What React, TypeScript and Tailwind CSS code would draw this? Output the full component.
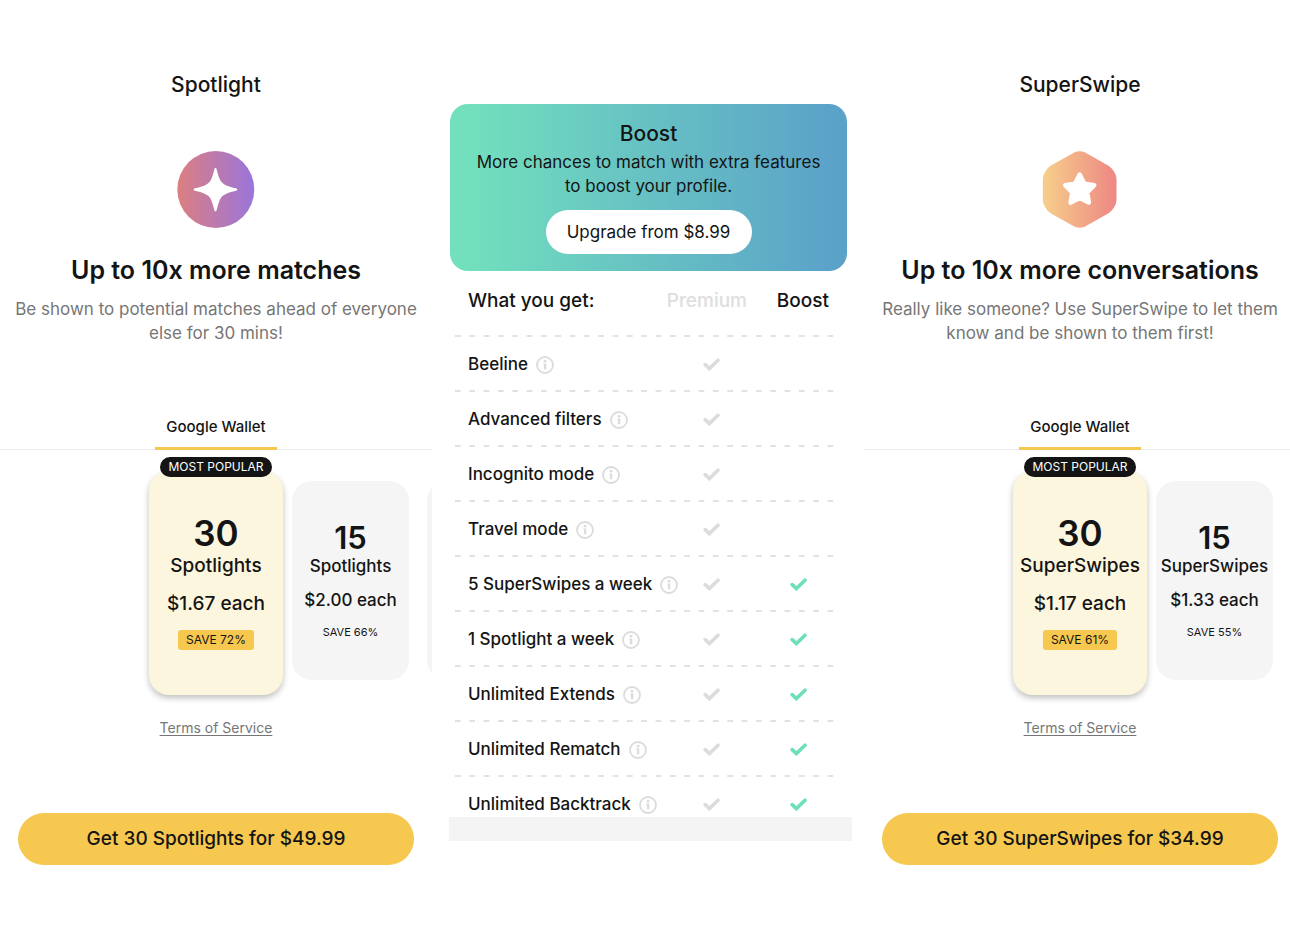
import type { ReactNode } from 'react';

type Plan = { count: number; each: string; save: string };

type Product = {
  name: string;
  headline: string;
  blurb: string;
  plans: Plan[];
  hasMore: boolean;
  total: string;
};

const spotlight: Product = {
  name: 'Spotlight',
  headline: 'Up to 10x more matches',
  blurb: 'Be shown to potential matches ahead of everyone else for 30 mins!',
  plans: [
    { count: 30, each: '$1.67 each', save: 'SAVE 72%' },
    { count: 15, each: '$2.00 each', save: 'SAVE 66%' },
  ],
  hasMore: true,
  total: '$49.99',
};

const superSwipe: Product = {
  name: 'SuperSwipe',
  headline: 'Up to 10x more conversations',
  blurb: 'Really like someone? Use SuperSwipe to let them know and be shown to them first!',
  plans: [
    { count: 30, each: '$1.17 each', save: 'SAVE 61%' },
    { count: 15, each: '$1.33 each', save: 'SAVE 55%' },
  ],
  hasMore: false,
  total: '$34.99',
};

const features = [
  { label: 'Beeline', boost: false },
  { label: 'Advanced filters', boost: false },
  { label: 'Incognito mode', boost: false },
  { label: 'Travel mode', boost: false },
  { label: '5 SuperSwipes a week', boost: true },
  { label: '1 Spotlight a week', boost: true },
  { label: 'Unlimited Extends', boost: true },
  { label: 'Unlimited Rematch', boost: true },
  { label: 'Unlimited Backtrack', boost: true },
];

function SpotlightIcon() {
  return (
    <svg width="78" height="77" viewBox="0 0 78 77" aria-hidden="true">
      <defs>
        <linearGradient id="spotlight-fill" x1="0" x2="1" y1="0" y2="0">
          <stop offset="0" stopColor="#dc7f80" />
          <stop offset="1" stopColor="#9a75dc" />
        </linearGradient>
      </defs>
      <circle cx="38.8" cy="38.5" r="38.5" fill="url(#spotlight-fill)" />
      <path
        d="M38.5 17C39.2 17 39.5 17.6 39.7 18.4C41.6 26.5 43.3 29.8 45.3 31.7C47.3 33.7 51 35.5 59 37.3C59.9 37.5 60.3 37.9 60.3 38.5C60.3 39.1 59.9 39.5 59 39.7C51 41.5 47.3 43.3 45.3 45.3C43.3 47.3 41.6 51 39.7 59C39.5 59.8 39.2 60.3 38.5 60.3C37.8 60.3 37.5 59.8 37.3 59C35.4 51 33.7 47.3 31.7 45.3C29.7 43.3 26 41.5 18 39.7C17.1 39.5 16.7 39.1 16.7 38.5C16.7 37.9 17.1 37.5 18 37.3C26 35.5 29.7 33.7 31.7 31.7C33.7 29.8 35.4 26.5 37.3 18.4C37.5 17.6 37.8 17 38.5 17Z"
        fill="#fff"
      />
    </svg>
  );
}

function SuperSwipeIcon() {
  return (
    <svg width="78" height="77" viewBox="0 0 78 77" aria-hidden="true">
      <defs>
        <linearGradient id="superswipe-fill" x1="0" x2="1" y1="0" y2="0">
          <stop offset="0" stopColor="#f6cf8b" />
          <stop offset="1" stopColor="#ee8784" />
        </linearGradient>
      </defs>
      <path
        d="M33.7 1.3Q38.7-1 43.7 1.3L67.5 14.8Q70.5 16.6 72.8 20.2Q75.5 24 75.5 28L75.5 49Q75.5 53 72.8 56.8Q70.5 60.4 67.5 62.2L43.7 75.7Q38.7 78 33.7 75.7L9.5 62.2Q6.5 60.4 4.5 56.8Q1.8 53 1.8 49L1.8 28Q1.8 24 4.5 20.2Q6.5 16.6 9.5 14.8Z"
        fill="url(#superswipe-fill)"
      />
      <path
        d="M38.7 23.6L43.4 32.8L53.2 34.2L46.2 41.4L47.8 51.6L38.7 46.9L29.6 51.6L31.2 41.4L24.2 34.2L34 32.8Z"
        fill="#fff"
        stroke="#fff"
        strokeWidth="4.5"
        strokeLinejoin="round"
      />
    </svg>
  );
}

function Check({ className }: { className: string }) {
  return (
    <svg width="17" height="13" viewBox="0 0 17 13" role="img" aria-label="Included" className={`ml-auto block ${className}`}>
      <path d="M2.2 6.6L6.4 10.6L15 2.2" fill="none" stroke="currentColor" strokeWidth="3.6" strokeLinecap="round" />
    </svg>
  );
}

function InfoIcon() {
  return (
    <svg width="18" height="18" viewBox="0 0 18 18" aria-hidden="true">
      <circle cx="9" cy="9" r="8" fill="none" stroke="currentColor" strokeWidth="1.8" />
      <circle cx="9" cy="5.2" r="1.4" fill="currentColor" />
      <path d="M7.5 7.6H10.3V13.3H7.9V9H7.5Z" fill="currentColor" />
    </svg>
  );
}

function ProductPanel({ product, icon }: { product: Product; icon: ReactNode }) {
  const units = `${product.name}s`;
  const [main, second] = product.plans;
  return (
    <section className="flex min-w-0 flex-col overflow-hidden pt-[70px]">
      <h1 className="text-center text-[21px] leading-[30px] font-medium">{product.name}</h1>
      <div className="mt-[51px] flex justify-center">{icon}</div>
      <h2 className="mt-6 text-center text-[25px] leading-9 font-semibold">{product.headline}</h2>
      <p className="mx-2 mt-[9px] text-center text-[17px] leading-6 text-[#767676]">{product.blurb}</p>

      <div role="tablist" aria-label="Payment method" className="mt-[60px] flex justify-center border-b border-[#ededed]">
        <button
          type="button"
          role="tab"
          aria-selected="true"
          className="-mb-px flex h-[45px] w-[122px] items-center justify-center border-b-[3px] border-[#f6c850] pt-[3px] text-[15px] font-medium"
        >
          Google Wallet
        </button>
      </div>

      <div className="flex items-start overflow-hidden pt-[21px] pb-[21px] pl-[calc(50%-67px)]">
        <button
          type="button"
          className="relative flex h-56 w-[134px] shrink-0 flex-col items-center rounded-[20px] bg-[#fdf6de] pt-[42px] shadow-[0_3px_6px_rgba(0,0,0,0.25)]"
        >
          <span className="absolute -top-[14px] flex h-5 w-28 items-center justify-center rounded-full bg-[#141414] text-[12px] whitespace-nowrap text-white">
            MOST POPULAR
          </span>
          <span className="text-[35px] leading-10 font-semibold">{main.count}</span>
          <span className="mt-px text-[19px] leading-6 font-medium">{units}</span>
          <span className="mt-[14px] text-[19px] leading-6 font-medium">{main.each}</span>
          <span className="mt-[14px] rounded-[3px] bg-[#f6c850] px-2 text-[12px] leading-5">{main.save}</span>
        </button>
        <button
          type="button"
          className="mt-[10px] ml-[9px] flex h-[199px] w-[117px] shrink-0 flex-col items-center rounded-[20px] bg-[#f5f5f5] pt-[37px]"
        >
          <span className="text-[31px] leading-10 font-semibold">{second.count}</span>
          <span className="text-[17px] leading-4 font-medium">{units}</span>
          <span className="mt-[14px] text-[17px] leading-6 font-medium">{second.each}</span>
          <span className="mt-[10px] text-[11px] leading-5">{second.save}</span>
        </button>
        {product.hasMore && (
          <div aria-hidden="true" className="mt-[10px] ml-[18px] h-[199px] w-[117px] shrink-0 rounded-[20px] bg-[#f5f5f5]" />
        )}
      </div>

      <a href="#terms" className="self-center text-[14px] leading-6 text-[#767676] underline underline-offset-2">
        Terms of Service
      </a>
      <button
        type="button"
        className="mx-[18px] mt-[73px] h-[52px] rounded-full bg-[#f6c850] text-[19px] font-medium"
      >
        Get {main.count} {units} for {product.total}
      </button>
    </section>
  );
}

function BoostPanel() {
  return (
    <section className="min-w-0 pt-[104px]">
      <div className="mr-[17px] ml-[18px] flex flex-col items-center rounded-[18px] bg-[linear-gradient(90deg,#72e0bd_4%,#5ba2c9_96%)] pt-4 pb-[17px]">
        <h1 className="text-[21px] leading-7 font-medium">Boost</h1>
        <p className="mx-6 mt-[2px] text-center text-[17px] leading-6">
          More chances to match with extra features to boost your profile.
        </p>
        <button type="button" className="mt-3 h-11 w-[206px] rounded-full bg-white pt-0.5 text-[17px]">
          Upgrade from $8.99
        </button>
      </div>

      <div className="mr-[22px] ml-[23px]">
        <table className="w-full table-fixed text-[17px] font-medium">
          <colgroup>
            <col />
            <col className="w-[68px]" />
            <col className="w-[95px]" />
          </colgroup>
          <thead>
            <tr className="h-16 align-top whitespace-nowrap">
              <th scope="col" className="pt-[18px] pl-[13px] text-left text-[19px] leading-6 font-medium">
                What you get:
              </th>
              <th scope="col" className="pt-[18px] text-[19px] leading-6 font-medium text-[#dedede]">
                <span className="flex justify-end">Premium</span>
              </th>
              <th scope="col" className="pt-[18px] pr-[13px] text-right text-[19px] leading-6 font-medium">
                Boost
              </th>
            </tr>
          </thead>
          <tbody>
            {features.map((feature) => (
              <tr
                key={feature.label}
                className="h-[55px] bg-[linear-gradient(90deg,#e2e2e2_6px,transparent_6px)] bg-[length:calc(100%/27)_2px] bg-repeat-x"
              >
                <th scope="row" className="pt-1 pl-[13px] text-left font-medium whitespace-nowrap">
                  <span className="flex items-center gap-2">
                    {feature.label}
                    <button type="button" aria-label={`About ${feature.label}`} className="text-[#dcdcdc]">
                      <InfoIcon />
                    </button>
                  </span>
                </th>
                <td className="pt-1 pr-[27px]">
                  <Check className="text-[#dcdcdc]" />
                </td>
                <td className="pt-1 pr-[35px]">
                  {feature.boost && <Check className="text-[#6ddfbd]" />}
                </td>
              </tr>
            ))}
          </tbody>
        </table>
      </div>
      <div className="relative -mt-[13px] mr-3 ml-[17px] h-6 bg-[#f4f4f4]" />
    </section>
  );
}

export default function App() {
  return (
    <div className="min-h-screen overflow-x-hidden bg-white font-['Inter',sans-serif] text-[#141414]">
      <main className="-mr-[6px] grid grid-cols-3 items-start">
        <ProductPanel product={spotlight} icon={<SpotlightIcon />} />
        <BoostPanel />
        <ProductPanel product={superSwipe} icon={<SuperSwipeIcon />} />
      </main>
    </div>
  );
}
